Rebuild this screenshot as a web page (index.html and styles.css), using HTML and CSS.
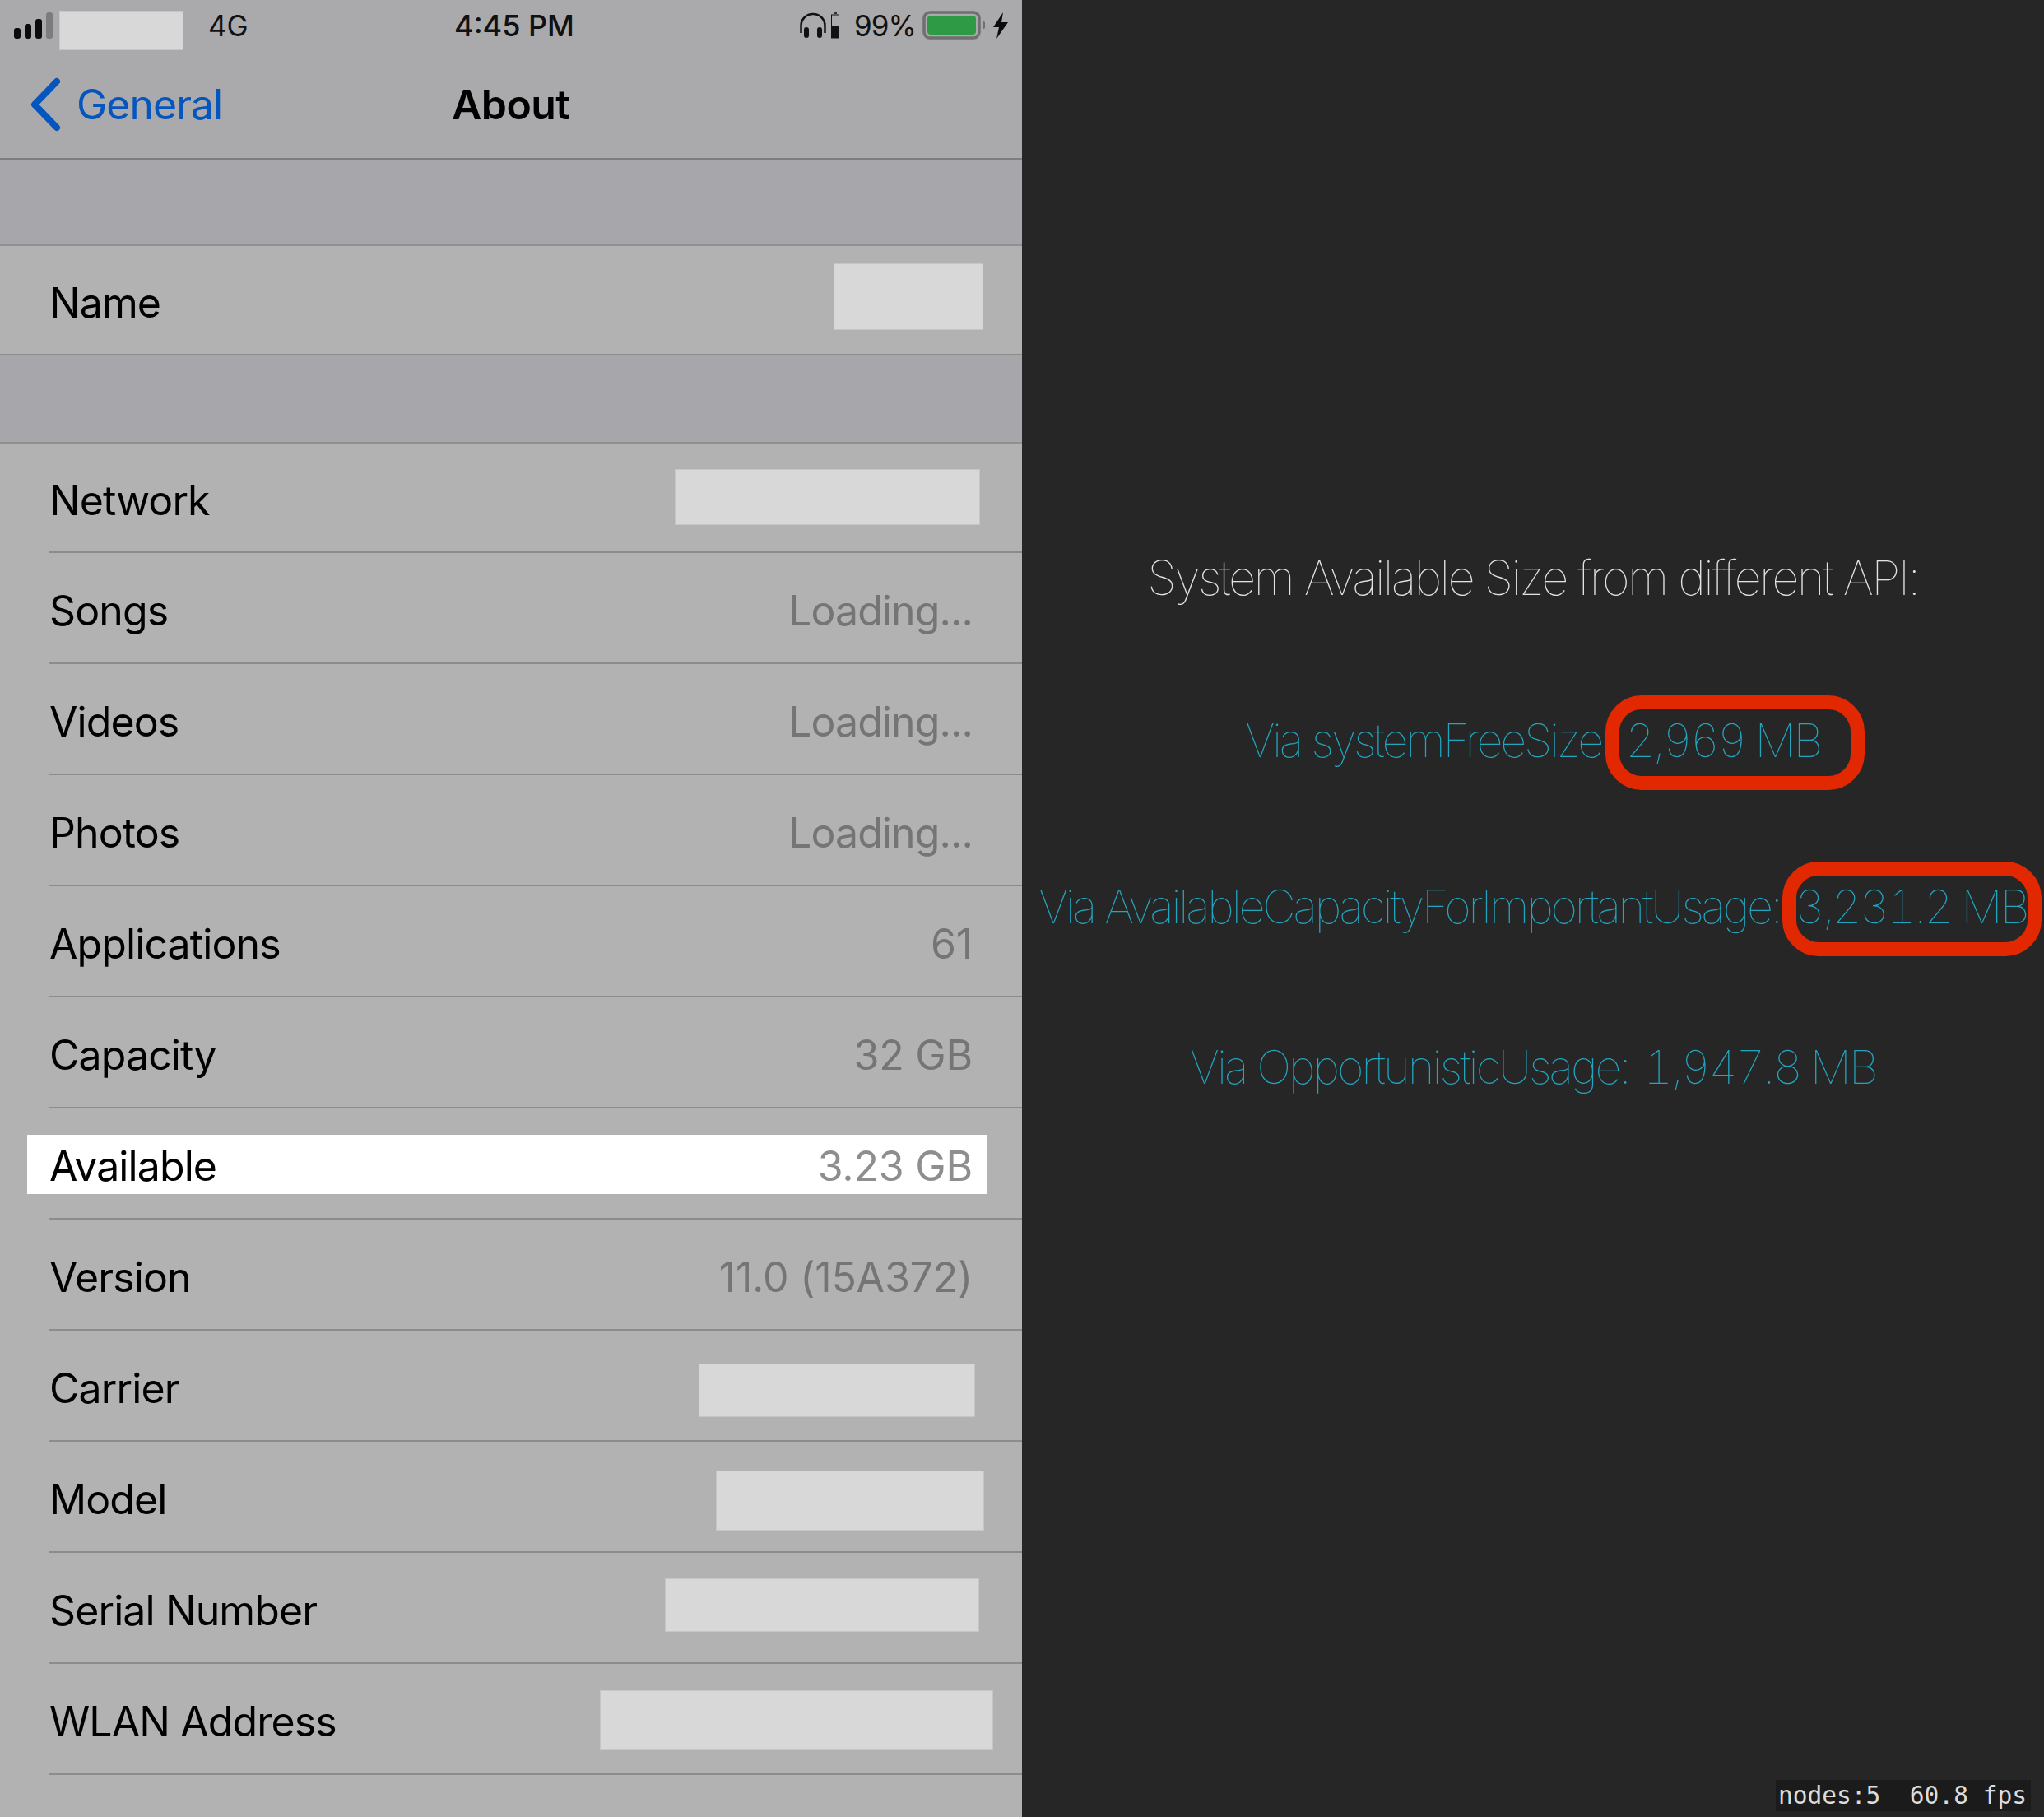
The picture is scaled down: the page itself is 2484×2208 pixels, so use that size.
FILE: index.html
```html
<!DOCTYPE html>
<html>
<head>
    <title>About</title>
    <link rel="stylesheet" href="styles.css">
</head>
<body>
    <div class="page">
        <div class="phone">
            <div class="status">
                <svg class="signal" width="50" height="32" viewBox="0 0 50 32">
                    <rect x="0" y="19" width="8" height="13" rx="3" fill="#0b0b0b"/>
                    <rect x="13" y="14" width="8" height="18" rx="3" fill="#0b0b0b"/>
                    <rect x="26" y="8" width="8" height="24" rx="3" fill="#0b0b0b"/>
                    <rect x="39" y="0" width="8" height="32" rx="3" fill="#7c7c7e"/>
                </svg>
                <span class="carrier-type">4G</span>
                <span class="time">4:45 PM</span>
                <svg class="headphones" width="34" height="32" viewBox="0 0 34 32">
                    <path d="M2.5 25V16C2.5 8 9 2 17 2s14.500 6 14.500 14v9" fill="none" stroke="#111" stroke-width="2.500"/>
                    <rect x="6" y="18" width="6" height="13" rx="3" fill="#111"/>
                    <rect x="22" y="18" width="6" height="13" rx="3" fill="#111"/>
                </svg>
                <svg class="mini-battery" width="10" height="32" viewBox="0 0 10 32">
                    <rect x="3" y="0" width="4" height="2" fill="#333"/>
                    <rect x="0.5" y="3" width="9" height="28" fill="none" stroke="#111"/>
                    <rect x="1" y="17" width="8" height="14" fill="#111"/>
                </svg>
                <span class="percent">99%</span>
                <svg class="battery" width="78" height="36" viewBox="0 0 78 36">
                    <rect x="2" y="2" width="67" height="31" rx="7" fill="none" stroke="#6f6f71" stroke-width="3.5"/>
                    <rect x="6" y="6" width="59" height="23" rx="4" fill="#2f9a46"/>
                    <path d="M73 12l3 2v7l-3 2z" fill="#6f6f71"/>
                </svg>
                <svg class="bolt" width="20" height="32" viewBox="0 0 20 32">
                    <path d="M13 0L1 18h7L5 32 19 12h-8z" fill="#0b0b0b"/>
                </svg>
            </div>
            <div class="nav">
                <svg class="chevron" width="40" height="66" viewBox="0 0 40 66">
                    <path d="M33 5L6 33l27 28" fill="none" stroke="#0455bd" stroke-width="8" stroke-linecap="round" stroke-linejoin="round"/>
                </svg>
                <span class="back">General</span>
                <span class="nav-title">About</span>
            </div>
            <div class="gap"></div>
            <div class="row first">
                <div class="row-inner last"><span>Name</span></div>
            </div>
            <div class="gap wide"></div>
            <div class="row first">
                <div class="row-inner"><span>Network</span></div>
            </div>
            <div class="row">
                <div class="row-inner"><span>Songs</span><span class="value">Loading...</span></div>
            </div>
            <div class="row">
                <div class="row-inner"><span>Videos</span><span class="value">Loading...</span></div>
            </div>
            <div class="row">
                <div class="row-inner"><span>Photos</span><span class="value">Loading...</span></div>
            </div>
            <div class="row">
                <div class="row-inner"><span>Applications</span><span class="value figure">61</span></div>
            </div>
            <div class="row">
                <div class="row-inner"><span>Capacity</span><span class="value figure">32 GB</span></div>
            </div>
            <div class="row available">
                <div class="row-inner"><span>Available</span><span class="value figure">3.23 GB</span></div>
            </div>
            <div class="row">
                <div class="row-inner"><span>Version</span><span class="value figure">11.0 (15A372)</span></div>
            </div>
            <div class="row">
                <div class="row-inner"><span>Carrier</span></div>
            </div>
            <div class="row">
                <div class="row-inner"><span>Model</span></div>
            </div>
            <div class="row">
                <div class="row-inner"><span>Serial Number</span></div>
            </div>
            <div class="row">
                <div class="row-inner"><span>WLAN Address</span></div>
            </div>
            <div class="row">
                <div class="row-inner"><span>Bluetooth</span></div>
            </div>

            <!-- blanked out values -->
            <div class="mask mask-status"></div>
            <div class="mask mask-name"></div>
            <div class="mask mask-network"></div>
            <div class="mask mask-carrier"></div>
            <div class="mask mask-model"></div>
            <div class="mask mask-serial"></div>
            <div class="mask mask-wlan"></div>
        </div>

        <div class="debug">
            <div class="api-title">System Available Size from different API:</div>
            <div class="api-line line-free">Via systemFreeSize: <span class="num">2,969 MB</span></div>
            <div class="api-line line-important">Via AvailableCapacityForImportantUsage: <span class="num">3,231.2 MB</span></div>
            <div class="api-line line-opportunistic">Via OpportunisticUsage: <span class="num">1,947.8 MB</span></div>

            <div class="oval oval-free"></div>
            <div class="oval oval-important"></div>
            <div class="stats">nodes:5  60.8 fps</div>
        </div>
    </div>
</body>
</html>
```

FILE: styles.css
```css
html, body {
    margin: 0;
    padding: 0;
}

.page {
    display: flex;
    width: 2484px;
    height: 2208px;
    overflow: hidden;
}

/* left half */
.phone {
    position: relative;
    width: 1242px;
    height: 2208px;
    overflow: hidden;
    background-color: #b2b2b2;
    color: #000;
    font-family: Inter, "Noto Sans", sans-serif;
    font-size: 50px;
    letter-spacing: -0.9px;
}

.status {
    display: flex;
    align-items: center;
    height: 62px;
    background-color: #aaaaac;
    font-size: 35px;
    letter-spacing: 0;
    color: #111;
}

.signal {
    margin: 0 0 0 17px;
    flex-shrink: 0;
}

.carrier-type {
    margin-left: 186px;
    width: 299px;
}

.time {
    font-size: 36px;
    font-weight: 500;
    width: 419px;
}

.headphones {
    flex-shrink: 0;
}

.mini-battery {
    margin-left: 5px;
    flex-shrink: 0;
}

.percent {
    margin-left: 18px;
    width: 83px;
    letter-spacing: -1px;
}

.battery {
    flex-shrink: 0;
}

.bolt {
    margin-left: 7px;
    flex-shrink: 0;
}

.nav {
    position: relative;
    display: flex;
    align-items: center;
    height: 132px;
    background-color: #aaaaac;
    border-bottom: 2px solid #7d7d80;
    box-sizing: border-box;
}

.chevron {
    margin-left: 36px;
    flex-shrink: 0;
}

.back {
    margin-left: 17px;
    color: #0455bd;
    letter-spacing: -1px;
}

.nav-title {
    position: absolute;
    left: 549px;
    font-weight: 600;
    letter-spacing: -0.6px;
}

.gap {
    height: 103px;
    background-color: #a6a6ab;
}

.gap.wide {
    height: 105px;
}

.row {
    height: 135px;
    padding-left: 60px;
    box-sizing: border-box;
    background-color: #b2b2b2;
}

.row.first {
    border-top: 2px solid #909092;
}

.row-inner {
    display: flex;
    justify-content: space-between;
    align-items: center;
    height: 100%;
    padding: 6px 60px 0 0;
    box-sizing: border-box;
    border-bottom: 2px solid #8c8c8c;
}

.row-inner.last {
    margin-left: -60px;
    padding-left: 60px;
}

.value {
    color: #757575;
}

.figure {
    letter-spacing: -0.2px;
}

.available {
    position: relative;
}

.available::before {
    content: "";
    position: absolute;
    left: 33px;
    top: 32px;
    width: 1167px;
    height: 72px;
    background-color: #fff;
}

.available .row-inner span {
    position: relative;
}

.available .value {
    color: #8e8e8e;
}

.mask {
    position: absolute;
    box-sizing: border-box;
    background-color: #d8d8d8;
    border: 1px solid #c6c6c6;
}

.mask-status {
    left: 72px;
    top: 13px;
    width: 151px;
    height: 48px;
}

.mask-name {
    left: 1013px;
    top: 320px;
    width: 182px;
    height: 81px;
}

.mask-network {
    left: 820px;
    top: 570px;
    width: 371px;
    height: 68px;
}

.mask-carrier {
    left: 849px;
    top: 1657px;
    width: 336px;
    height: 65px;
}

.mask-model {
    left: 870px;
    top: 1787px;
    width: 326px;
    height: 73px;
}

.mask-serial {
    left: 808px;
    top: 1918px;
    width: 382px;
    height: 65px;
}

.mask-wlan {
    left: 729px;
    top: 2054px;
    width: 478px;
    height: 72px;
}

/* right half */
.debug {
    position: relative;
    width: 1242px;
    height: 2208px;
    overflow: hidden;
    background-color: #262626;
    text-align: center;
    font-family: Inter, "Noto Sans", sans-serif;
    font-weight: 100;
    white-space: nowrap;
}

.api-title {
    margin-top: 672px;
    height: 60px;
    line-height: 60px;
    font-size: 58px;
    color: #e2e2e2;
    letter-spacing: -2.66px;
}

.api-line {
    height: 60px;
    line-height: 60px;
    font-size: 56px;
    color: #22a6c0;
    letter-spacing: -3.25px;
}

.num {
    margin-left: 5px;
    letter-spacing: -2.9px;
    font-variant-numeric: tabular-nums;
}

.line-free {
    margin-top: 138px;
}

.line-important {
    margin-top: 142px;
}

.line-opportunistic {
    margin-top: 135px;
    letter-spacing: -3px;
}

.oval {
    position: absolute;
    box-sizing: border-box;
    width: 315px;
    height: 115px;
    border: 17px solid #e12800;
    border-radius: 44px;
}

.oval-free {
    left: 709px;
    top: 845px;
}

.oval-important {
    left: 924px;
    top: 1047px;
}

.stats {
    position: absolute;
    left: 916px;
    top: 2163px;
    width: 310px;
    height: 38px;
    line-height: 38px;
    background-color: #1b1b1b;
    color: #dcdcdc;
    font-family: "DejaVu Sans Mono", monospace;
    font-weight: 400;
    font-size: 29.5px;
    text-align: left;
    white-space: pre;
    padding-left: 3px;
    box-sizing: border-box;
}
```
